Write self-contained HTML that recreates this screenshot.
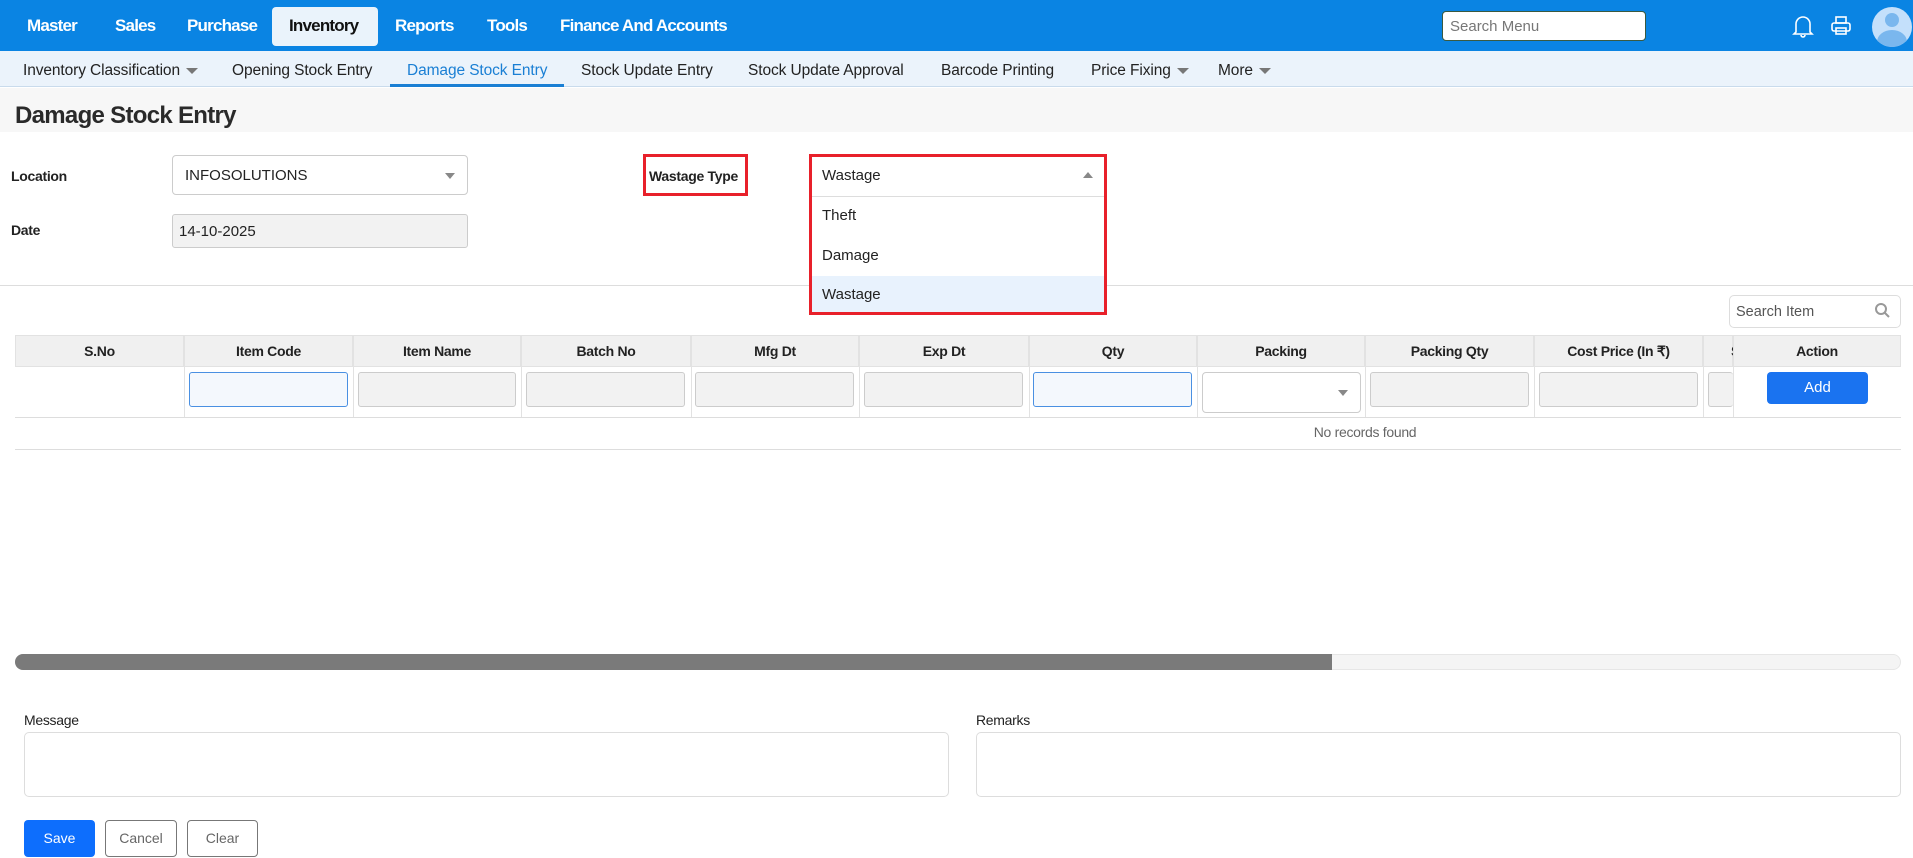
<!DOCTYPE html>
<html><head><meta charset="utf-8"><style>
*{box-sizing:border-box;margin:0;padding:0}
body{width:1913px;height:858px;overflow:hidden;background:#fff;font-family:"Liberation Sans",sans-serif;color:#222;position:relative}
.a{position:absolute}
.top{left:0;top:0;width:1913px;height:51px;background:#0a84e3}
.m{top:16px;font-size:17px;font-weight:bold;color:#fff;letter-spacing:-0.8px}
.sub{left:0;top:51px;width:1913px;height:36px;background:#ebf3fb;border-bottom:1px solid #c9dbec}
.s{top:62px;font-size:15.5px;color:#222;letter-spacing:-0.1px}
.car{display:inline-block;width:0;height:0;border-left:6px solid transparent;border-right:6px solid transparent;border-top:6px solid #777;vertical-align:middle;margin-left:6px}
.inp{border:1px solid #ccc;border-radius:3px;background:#f2f2f2}
.th{top:335px;height:32px;background:#f0f0f0;border:1px solid #e2e2e2;font-size:14px;font-weight:bold;text-align:center;line-height:30px;letter-spacing:-0.3px}
.lbl{font-size:14px;font-weight:bold;letter-spacing:-0.3px}
</style></head><body>
<div class="a top"></div>
<div class="a" style="left:272px;top:7px;width:106px;height:39px;background:#eaf3fb;border-radius:4px"></div>
<div class="a m" style="left:27px">Master</div>
<div class="a m" style="left:115px">Sales</div>
<div class="a m" style="left:187px">Purchase</div>
<div class="a m" style="left:289px;color:#111">Inventory</div>
<div class="a m" style="left:395px">Reports</div>
<div class="a m" style="left:487px">Tools</div>
<div class="a m" style="left:560px">Finance And Accounts</div>
<div class="a" style="left:1442px;top:11px;width:204px;height:30px;background:#fff;border:1px solid #3a5a40;border-radius:4px;font-size:15px;color:#777;padding:6px 7px">Search Menu</div>
<svg class="a" style="left:1792px;top:14px" width="22" height="24" viewBox="0 0 22 24" fill="none" stroke="#fff" stroke-width="1.6"><path d="M4 18V10a7 7 0 0 1 14 0v8l2 2H2z"/><path d="M9 21a2 2 0 0 0 4 0"/></svg>
<svg class="a" style="left:1830px;top:16px" width="22" height="20" viewBox="0 0 22 20" fill="none" stroke="#fff" stroke-width="1.6"><rect x="6" y="1" width="10" height="6"/><rect x="2" y="7" width="18" height="8" rx="2"/><rect x="6" y="12" width="10" height="6"/></svg>
<div class="a" style="left:1872px;top:7px;width:40px;height:40px;border-radius:50%;background:#c4e0fb;overflow:hidden"><div class="a" style="left:13px;top:6px;width:14px;height:14px;border-radius:50%;background:#7ab7ee"></div><div class="a" style="left:5px;top:23px;width:30px;height:24px;border-radius:50%;background:#7ab7ee"></div></div>

<div class="a sub"></div>
<div class="a s" style="left:23px">Inventory Classification<span class="car"></span></div>
<div class="a s" style="left:232px">Opening Stock Entry</div>
<div class="a s" style="left:407px;color:#1a7fd4">Damage Stock Entry</div>
<div class="a" style="left:390px;top:84px;width:174px;height:3px;background:#1a7fd4"></div>
<div class="a s" style="left:581px">Stock Update Entry</div>
<div class="a s" style="left:748px">Stock Update Approval</div>
<div class="a s" style="left:941px">Barcode Printing</div>
<div class="a s" style="left:1091px">Price Fixing<span class="car"></span></div>
<div class="a s" style="left:1218px">More<span class="car"></span></div>

<div class="a" style="left:0;top:88px;width:1913px;height:44px;background:#f7f7f7"></div>
<div class="a" style="left:15px;top:102px;font-size:24px;font-weight:bold;color:#2a2a2a;letter-spacing:-0.7px">Damage Stock Entry</div>

<div class="a lbl" style="left:11px;top:168px">Location</div>
<div class="a" style="left:172px;top:155px;width:296px;height:40px;border:1px solid #ccc;border-radius:4px;font-size:15px;padding:11px 12px">INFOSOLUTIONS</div>
<div class="a" style="left:445px;top:173px;border-left:5px solid transparent;border-right:5px solid transparent;border-top:6px solid #888"></div>
<div class="a lbl" style="left:11px;top:222px">Date</div>
<div class="a inp" style="left:172px;top:214px;width:296px;height:34px;font-size:15px;padding:8px 6px">14-10-2025</div>

<div class="a" style="left:643px;top:154px;width:105px;height:42px;border:3px solid #e8202a"></div>
<div class="a lbl" style="left:649px;top:168px">Wastage Type</div>

<div class="a" style="left:809px;top:154px;width:298px;height:161px;border:3px solid #e8202a;background:#fff"></div>
<div class="a" style="left:812px;top:196px;width:292px;height:1px;background:#ddd"></div>
<div class="a" style="left:812px;top:276px;width:292px;height:36px;background:#e8f2fd"></div>
<div class="a" style="left:822px;top:167px;font-size:15px">Wastage</div>
<div class="a" style="left:1083px;top:172px;border-left:5px solid transparent;border-right:5px solid transparent;border-bottom:6px solid #888"></div>
<div class="a" style="left:822px;top:207px;font-size:15px">Theft</div>
<div class="a" style="left:822px;top:247px;font-size:15px">Damage</div>
<div class="a" style="left:822px;top:286px;font-size:15px">Wastage</div>

<div class="a" style="left:0;top:285px;width:809px;height:1px;background:#ddd"></div>
<div class="a" style="left:1107px;top:285px;width:806px;height:1px;background:#ddd"></div>

<div class="a" style="left:1729px;top:295px;width:172px;height:33px;border:1px solid #ddd;border-radius:5px;font-size:14.5px;color:#555;padding:8px 6px">Search Item</div>
<svg class="a" style="left:1874px;top:302px" width="16" height="16" viewBox="0 0 16 16" fill="none" stroke="#999" stroke-width="2"><circle cx="7" cy="7" r="5"/><path d="M11 11l4 4"/></svg>

<div class="a th" style="left:15px;width:169px">S.No</div>
<div class="a th" style="left:184px;width:169px">Item Code</div>
<div class="a th" style="left:353px;width:168px">Item Name</div>
<div class="a th" style="left:521px;width:170px">Batch No</div>
<div class="a th" style="left:691px;width:168px">Mfg Dt</div>
<div class="a th" style="left:859px;width:170px">Exp Dt</div>
<div class="a th" style="left:1029px;width:168px">Qty</div>
<div class="a th" style="left:1197px;width:168px">Packing</div>
<div class="a th" style="left:1365px;width:169px">Packing Qty</div>
<div class="a th" style="left:1534px;width:169px">Cost Price (In ₹)</div>
<div class="a th" style="left:1703px;width:30px;text-align:left;padding-left:27px">S</div>
<div class="a th" style="left:1733px;width:168px">Action</div>

<div class="a" style="left:15px;top:367px;width:1886px;height:51px;border-bottom:1px solid #ddd"></div>
<div class="a" style="left:184px;top:367px;width:1px;height:50px;background:#e2e2e2"></div>
<div class="a" style="left:353px;top:367px;width:1px;height:50px;background:#e2e2e2"></div>
<div class="a" style="left:521px;top:367px;width:1px;height:50px;background:#e2e2e2"></div>
<div class="a" style="left:691px;top:367px;width:1px;height:50px;background:#e2e2e2"></div>
<div class="a" style="left:859px;top:367px;width:1px;height:50px;background:#e2e2e2"></div>
<div class="a" style="left:1029px;top:367px;width:1px;height:50px;background:#e2e2e2"></div>
<div class="a" style="left:1197px;top:367px;width:1px;height:50px;background:#e2e2e2"></div>
<div class="a" style="left:1365px;top:367px;width:1px;height:50px;background:#e2e2e2"></div>
<div class="a" style="left:1534px;top:367px;width:1px;height:50px;background:#e2e2e2"></div>
<div class="a" style="left:1703px;top:367px;width:1px;height:50px;background:#e2e2e2"></div>
<div class="a" style="left:1733px;top:367px;width:1px;height:50px;background:#e2e2e2"></div>

<div class="a" style="left:189px;top:372px;width:159px;height:35px;border:1px solid #4a90e2;border-radius:3px;background:#f4f8fd"></div>
<div class="a inp" style="left:358px;top:372px;width:158px;height:35px"></div>
<div class="a inp" style="left:526px;top:372px;width:159px;height:35px"></div>
<div class="a inp" style="left:695px;top:372px;width:159px;height:35px"></div>
<div class="a inp" style="left:864px;top:372px;width:159px;height:35px"></div>
<div class="a" style="left:1033px;top:372px;width:159px;height:35px;border:1px solid #4a90e2;border-radius:3px;background:#f4f8fd"></div>
<div class="a" style="left:1202px;top:372px;width:159px;height:41px;border:1px solid #ccc;border-radius:4px"></div>
<div class="a" style="left:1338px;top:390px;border-left:5px solid transparent;border-right:5px solid transparent;border-top:6px solid #888"></div>
<div class="a inp" style="left:1370px;top:372px;width:159px;height:35px"></div>
<div class="a inp" style="left:1539px;top:372px;width:159px;height:35px"></div>
<div class="a inp" style="left:1708px;top:372px;width:25px;height:35px;border-right:none"></div>
<div class="a" style="left:1767px;top:372px;width:101px;height:32px;background:#1a73f0;border-radius:4px;color:#fff;font-size:15px;text-align:center;line-height:32px">Add</div>

<div class="a" style="left:15px;top:449px;width:1886px;height:1px;background:#ddd"></div>
<div class="a" style="left:1270px;top:424px;width:190px;text-align:center;font-size:14px;color:#666;letter-spacing:-0.3px">No records found</div>

<div class="a" style="left:15px;top:654px;width:1886px;height:16px;background:#f4f4f4;border:1px solid #e6e6e6;border-radius:8px"></div>
<div class="a" style="left:15px;top:654px;width:1317px;height:16px;background:#7a7a7a;border-radius:8px 0 0 8px"></div>

<div class="a" style="left:24px;top:712px;font-size:14px;letter-spacing:-0.3px">Message</div>
<div class="a" style="left:24px;top:732px;width:925px;height:65px;border:1px solid #ddd;border-radius:5px"></div>
<div class="a" style="left:976px;top:712px;font-size:14px;letter-spacing:-0.3px">Remarks</div>
<div class="a" style="left:976px;top:732px;width:925px;height:65px;border:1px solid #ddd;border-radius:5px"></div>

<div class="a" style="left:24px;top:820px;width:71px;height:37px;background:#0d6efd;border-radius:4px;color:#fff;font-size:14px;text-align:center;line-height:37px">Save</div>
<div class="a" style="left:105px;top:820px;width:72px;height:37px;border:1px solid #777;border-radius:4px;color:#666;font-size:14px;text-align:center;line-height:35px">Cancel</div>
<div class="a" style="left:187px;top:820px;width:71px;height:37px;border:1px solid #777;border-radius:4px;color:#666;font-size:14px;text-align:center;line-height:35px">Clear</div>
</body></html>
